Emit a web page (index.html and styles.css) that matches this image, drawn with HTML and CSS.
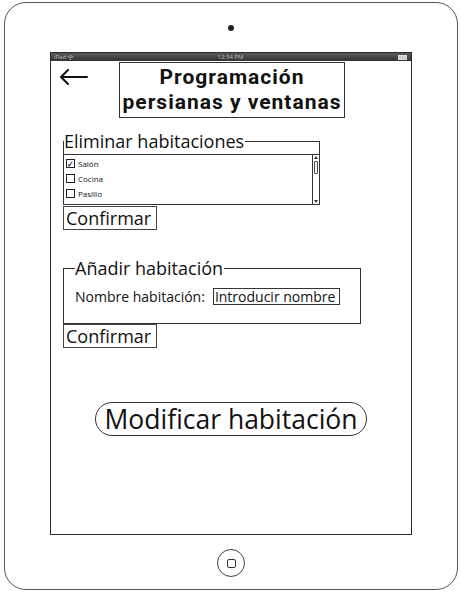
FILE: index.html
```html
<!DOCTYPE html>
<html lang="es">
  <head>
    <meta charset="UTF-8">
    <meta name="viewport" content="width=device-width, initial-scale=1.0">
    <title>Programación persianas y ventanas</title>
    <link rel="stylesheet" href="styles.css">
  </head>
  <body>
    <div class="device">
      <div class="camera"></div>

      <div class="screen">
        <div class="status-bar">
          <span class="carrier">iPad
            <svg class="wifi" width="7" height="5" viewBox="0 0 7 5"><path d="M0.5 1.8 Q3.5 -0.6 6.5 1.8 M1.6 2.9 Q3.5 1.4 5.4 2.9" stroke="#bbb" stroke-width="0.8" fill="none"/><circle cx="3.5" cy="4.2" r="0.7" fill="#bbb"/></svg>
          </span>
          <span class="clock">12:34 PM</span>
          <span class="battery"></span>
        </div>

        <div class="content">
          <div class="header">
            <svg class="back" width="30" height="16" viewBox="0 0 30 16">
              <path d="M28 8 H2 M9 1 L2 8 L9 15" stroke="#111" stroke-width="2" fill="none" stroke-linecap="round" stroke-linejoin="round"/>
            </svg>
            <h1 class="title">Programación<br>persianas y ventanas</h1>
          </div>

          <fieldset class="group group-delete">
            <legend>Eliminar habitaciones</legend>
            <div class="list">
              <ul class="list-items">
                <li><span class="check checked">&#10003;</span>Salón</li>
                <li><span class="check"></span>Cocina</li>
                <li><span class="check"></span>Pasillo</li>
              </ul>
              <div class="scrollbar">
                <span class="scroll-arrow up"></span>
                <span class="thumb"></span>
                <span class="scroll-arrow down"></span>
              </div>
            </div>
          </fieldset>
          <button class="btn">Confirmar</button>

          <fieldset class="group group-add">
            <legend>Añadir habitación</legend>
            <div class="field-row">
              <label for="roomName">Nombre habitación:</label>
              <input id="roomName" class="text-input" type="text" value="Introducir nombre">
            </div>
          </fieldset>
          <button class="btn btn-flush">Confirmar</button>

          <button class="pill">Modificar habitación</button>
        </div>
      </div>

      <div class="home"><span class="home-square"></span></div>
    </div>
  </body>
</html>
```

FILE: styles.css
```css
body {
  margin: 0;
  background: #ffffff;
  font-family: 'Open Sans', 'Lato', sans-serif;
  color: #111;
}

.device {
  box-sizing: border-box;
  width: 454px;
  height: 588px;
  margin: 2px 0 0 4px;
  border: 1.5px solid #555;
  border-radius: 22px;
  display: flex;
  flex-direction: column;
  align-items: center;
}

.camera {
  width: 6px;
  height: 6px;
  border-radius: 50%;
  background: #222;
  margin-top: 22px;
}

.screen {
  box-sizing: border-box;
  width: 362px;
  height: 483px;
  margin-top: 21px;
  border: 1px solid #2a2a2a;
  display: flex;
  flex-direction: column;
}

/* status bar */
.status-bar {
  height: 8px;
  background: linear-gradient(#5a5a5a, #333);
  display: flex;
  align-items: center;
  justify-content: space-between;
  padding: 0 4px 0 3px;
  font-size: 6px;
  line-height: 8px;
  color: #bbb;
}

.carrier {
  flex: 1;
  display: flex;
  align-items: center;
  gap: 1px;
}

.clock {
  flex: 1;
  text-align: center;
}

.battery {
  flex: 1;
  display: flex;
  justify-content: flex-end;
}

.battery::after {
  content: "";
  width: 7px;
  height: 3px;
  background: #ccc;
  border: 0.5px solid #ddd;
}

/* content */
.content {
  display: flex;
  flex-direction: column;
  align-items: flex-start;
  padding-left: 12px;
}

.header {
  display: flex;
  align-items: flex-start;
  margin-top: 1px;
  margin-left: -4px;
}

.back {
  margin-top: 7px;
}

.title {
  box-sizing: border-box;
  width: 226px;
  height: 56px;
  margin: 0 0 0 30px;
  padding: 2px 0;
  border: 1px solid #333;
  font-family: 'Roboto', 'Open Sans', sans-serif;
  font-size: 21px;
  font-weight: 700;
  line-height: 25px;
  letter-spacing: 1px;
  text-align: center;
  white-space: nowrap;
}

.group {
  box-sizing: border-box;
  margin: 12px 0 0;
  padding: 0;
  border: 1px solid #333;
  min-width: 0;
}

.group legend {
  padding: 0 1px 0 0;
  font-size: 18px;
  line-height: 22px;
}

.group-delete {
  width: 257px;
  border-bottom: 0;
}

.list {
  display: flex;
  height: 51px;
  box-sizing: border-box;
  margin: 2px -1px 0;
  border: 1px solid #333;
}

.list-items {
  flex: 1;
  list-style: none;
  margin: 0;
  padding: 1px 2px;
  font-size: 8px;
}

.list-items li {
  display: flex;
  align-items: center;
  height: 15px;
}

.check {
  box-sizing: border-box;
  width: 9px;
  height: 9px;
  border: 1px solid #222;
  margin-right: 3px;
  font-size: 8px;
  line-height: 7px;
  text-align: center;
  font-weight: 700;
}

.scrollbar {
  width: 6px;
  border-left: 1px solid #333;
  display: flex;
  flex-direction: column;
}

.scroll-arrow {
  height: 5px;
  position: relative;
}

.scroll-arrow::after {
  content: "";
  position: absolute;
  left: 1px;
  border-left: 2px solid transparent;
  border-right: 2px solid transparent;
}

.scroll-arrow.up::after {
  top: 1px;
  border-bottom: 3px solid #333;
}

.scroll-arrow.down {
  margin-top: auto;
}

.scroll-arrow.down::after {
  bottom: 1px;
  border-top: 3px solid #333;
}

.thumb {
  height: 11px;
  margin: 1px 1px 0;
  border: 1px solid #444;
  border-radius: 1px;
}

.btn {
  box-sizing: border-box;
  width: 94px;
  height: 24px;
  margin-top: 1px;
  padding: 0 0 0 2px;
  border: 1px solid #444;
  background: #fff;
  font-family: inherit;
  font-size: 18px;
  line-height: 22px;
  color: #111;
  text-align: left;
}

.btn-flush {
  margin-top: 0;
}

.group-add {
  width: 298px;
  margin-top: 27px;
  padding: 0 0 17px 11px;
}

.field-row {
  display: flex;
  align-items: center;
  margin-top: 8px;
  font-size: 14px;
}

.field-row label {
  margin-right: 8px;
}

.text-input {
  box-sizing: border-box;
  width: 127px;
  height: 17px;
  margin: 0;
  padding: 0 1px;
  border: 1px solid #333;
  font-family: inherit;
  font-size: 14px;
  color: #111;
}

.pill {
  align-self: center;
  box-sizing: border-box;
  width: 272px;
  height: 34px;
  margin: 54px 0 0 -12px;
  padding: 0;
  border: 1px solid #333;
  border-radius: 17px;
  background: #fff;
  font-family: inherit;
  font-size: 26.5px;
  line-height: 32px;
  color: #111;
  white-space: nowrap;
}

.home {
  box-sizing: border-box;
  width: 28px;
  height: 28px;
  margin-top: 14px;
  border: 1px solid #444;
  border-radius: 50%;
  display: flex;
  align-items: center;
  justify-content: center;
}

.home-square {
  width: 7px;
  height: 7px;
  border: 1px solid #333;
  border-radius: 2px;
}
```
